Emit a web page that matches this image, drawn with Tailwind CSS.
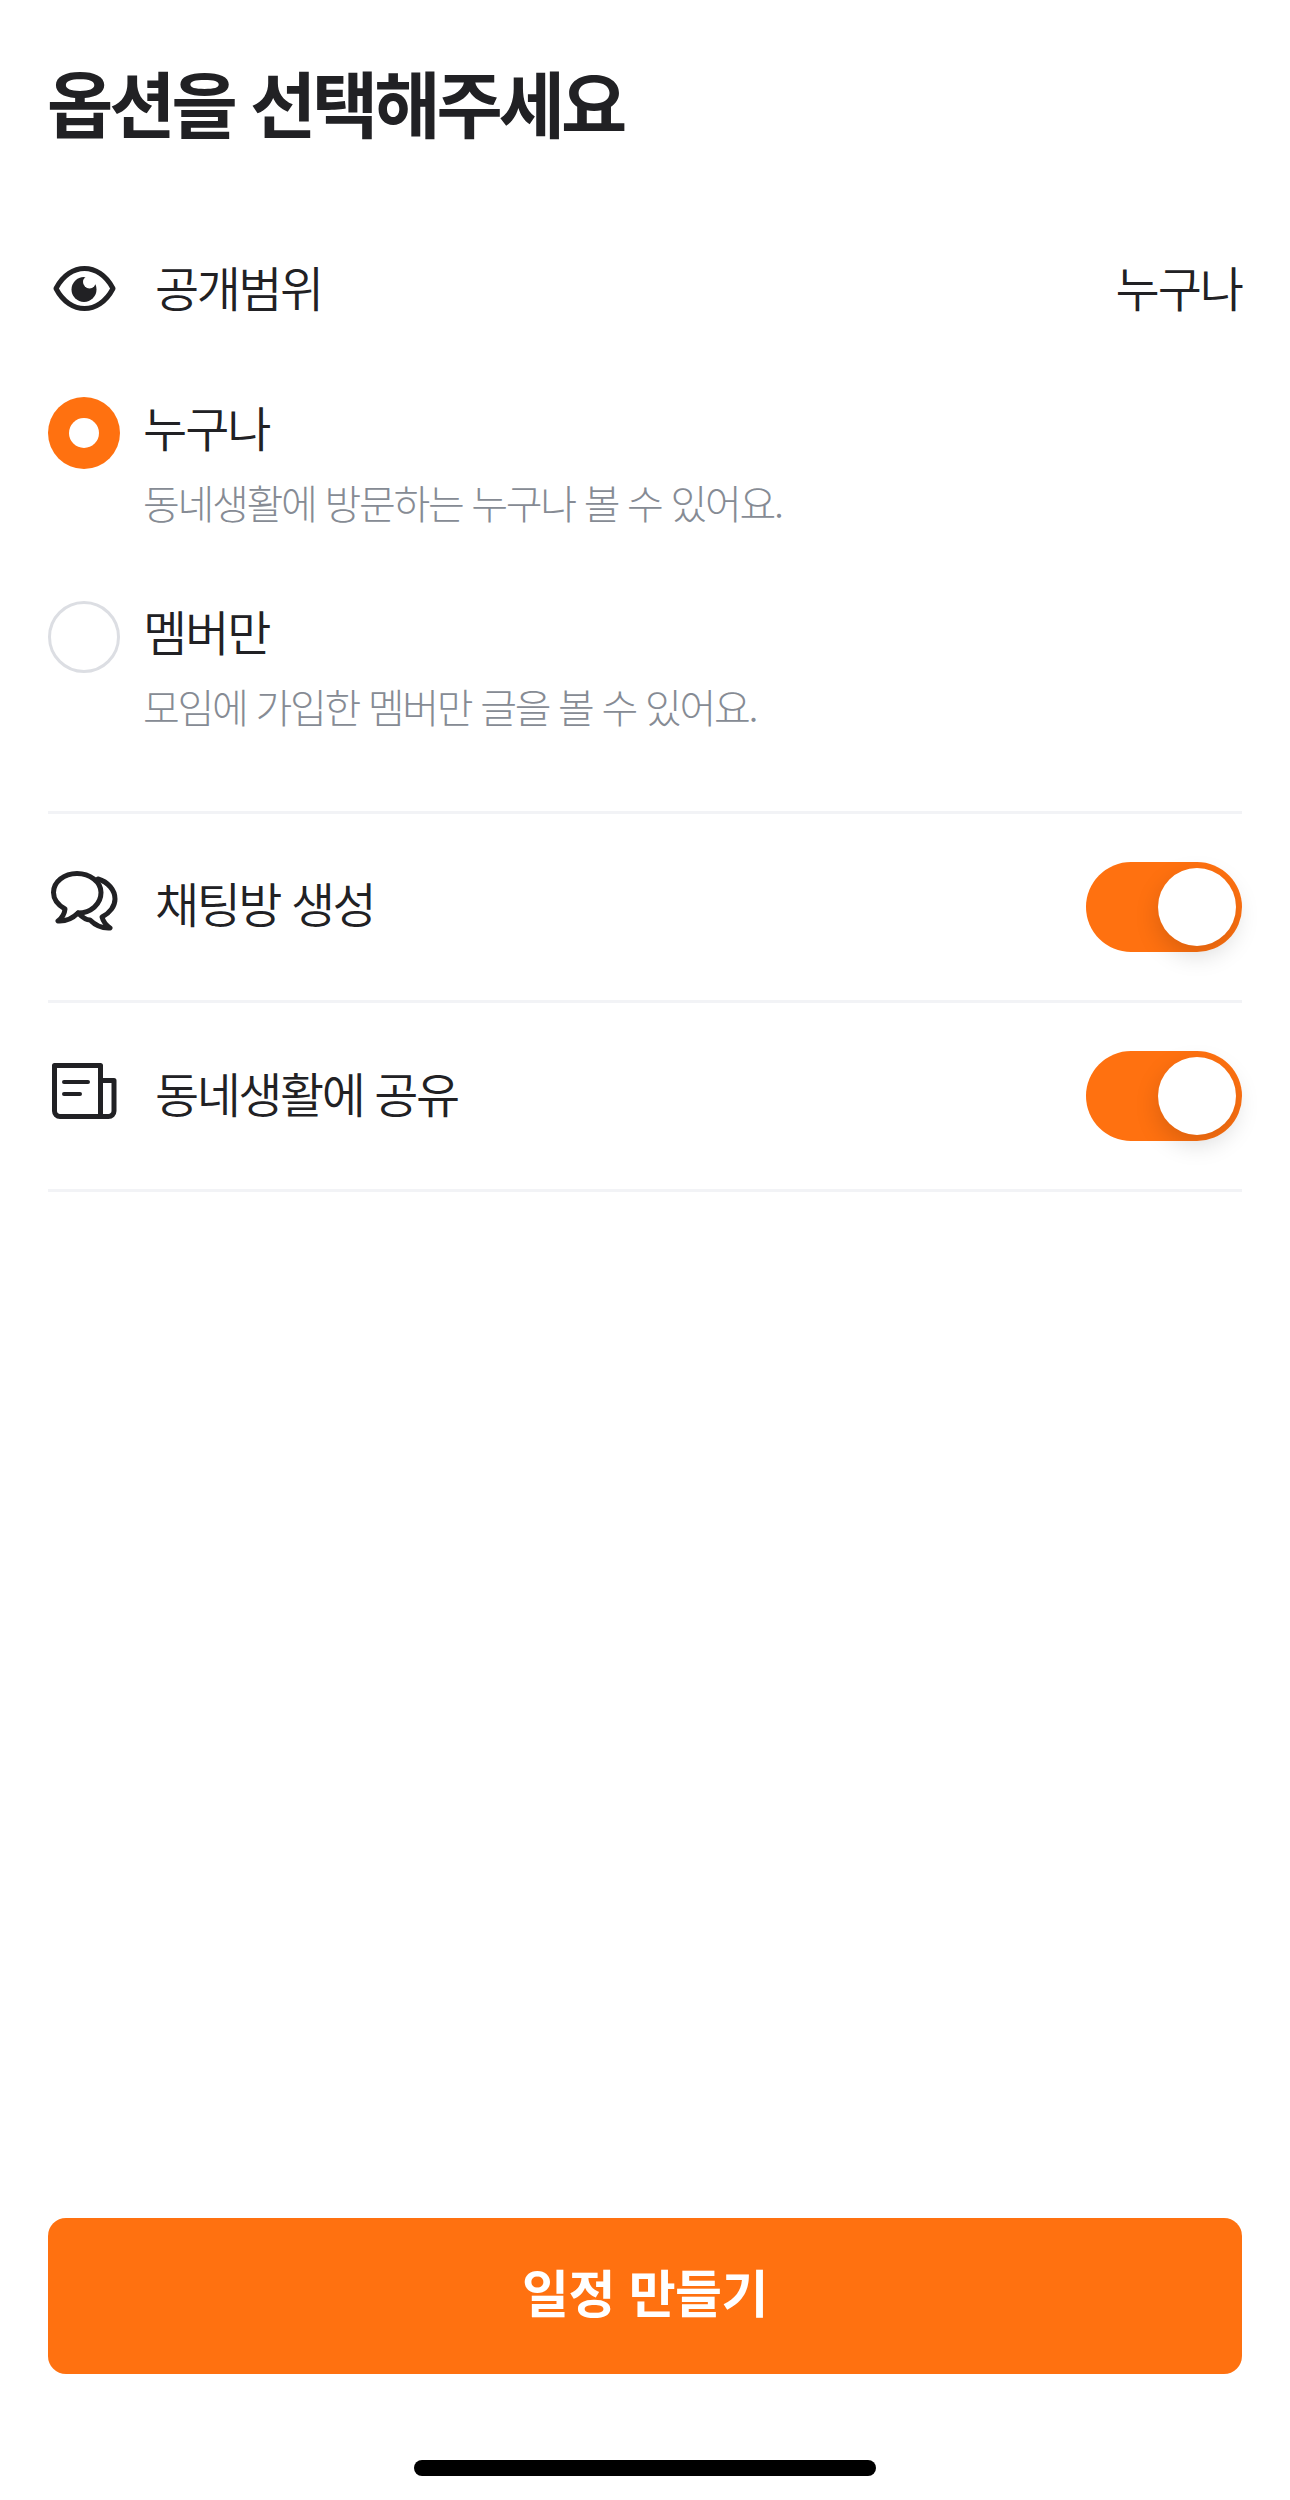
<!DOCTYPE html>
<html lang="ko">
<head>
  <meta charset="UTF-8" />
  <title>옵션 선택</title>
  <script src="https://cdn.jsdelivr.net/npm/@tailwindcss/browser@4"></script>
</head>
<body class="bg-white">
<div class="w-[1290px] h-[2500px] flex flex-col font-['Noto_Sans_CJK_KR',sans-serif] text-[#212124] overflow-hidden">

  <!-- Title -->
  <h1 class="mt-[55px] ml-[47px] h-[92px] leading-[92px] text-[72px] font-bold tracking-[-4px]">옵션을 선택해주세요</h1>

  <div class="mx-[48px] flex-1 flex flex-col">

    <!-- Visibility -->
    <div class="mt-[97px] h-[88px] flex items-center">
      <svg class="w-[72px] h-[72px] shrink-0" viewBox="0 0 72 72" fill="none" stroke="#212124" stroke-width="5" stroke-linejoin="round">
        <path d="M8 36.5C15 23 26 16.5 36.5 16.5S58 23 65 36.5C58 50 47 56.5 36.5 56.5S15 50 8 36.5Z" />
        <circle cx="36" cy="37.5" r="12.5" fill="#212124" stroke="none" />
        <circle cx="41.5" cy="30" r="6.5" fill="#fff" stroke="none" />
      </svg>
      <span class="ml-[35px] -translate-y-[2px] text-[48px] font-[350] tracking-[-2.5px]">공개범위</span>
      <span class="ml-auto -translate-y-[2px] text-[48px] font-[350] tracking-[-2px]">누구나</span>
    </div>

    <!-- Radio options -->
    <div class="mt-[65px] flex items-start gap-[23px]">
      <div class="w-[72px] h-[72px] rounded-full bg-[#ff7110] flex items-center justify-center shrink-0">
        <div class="w-[30px] h-[30px] rounded-full bg-white"></div>
      </div>
      <div>
        <p class="h-[58px] leading-[58px] text-[48px] font-[350] tracking-[-2px]">누구나</p>
        <p class="mt-[17px] h-[60px] leading-[60px] text-[40px] font-light tracking-[-2.3px] text-[#868b94]">동네생활에 방문하는 누구나 볼 수 있어요.</p>
      </div>
    </div>
    <div class="mt-[69px] flex items-start gap-[23px]">
      <div class="w-[72px] h-[72px] rounded-full border-[3px] border-[#dcdee3] shrink-0"></div>
      <div>
        <p class="h-[58px] leading-[58px] text-[48px] font-[350] tracking-[-2px]">멤버만</p>
        <p class="mt-[17px] h-[60px] leading-[60px] text-[40px] font-light tracking-[-2.3px] text-[#868b94]">모임에 가입한 멤버만 글을 볼 수 있어요.</p>
      </div>
    </div>

    <!-- Toggles -->
    <div class="mt-[75px] border-t-[3px] border-[#f2f3f6] h-[189px] flex items-center">
      <svg class="w-[72px] h-[72px] shrink-0 -mt-[6px]" viewBox="0 0 72 72" fill="none" stroke="#212124" stroke-width="5" stroke-linejoin="round" stroke-linecap="round">
        <path d="M29 5.5C16 5.5 5.5 14 5.5 24.5C5.5 31 10 37 17 41C16.5 46 14 50 10 53C18 53.5 25 50 30 45C43 45 53 36 53 24.5C53 14 42 5.5 29 5.5Z" />
        <path d="M50 11C60 14 67 22 67 31C67 38 62 45 54 49C55 53 58 57 62 60C54 60.5 47 57 42 52C37 52 33 48 30 45" />
      </svg>
      <span class="ml-[35px] -translate-y-[5px] text-[48px] font-[350] tracking-[-2.5px]">채팅방 생성</span>
      <div class="ml-auto w-[156px] h-[90px] rounded-full bg-[#ff7110] flex items-center justify-end pr-[6px]">
        <div class="w-[78px] h-[78px] rounded-full bg-white shadow-[0_9px_24px_rgba(0,0,0,0.15)]"></div>
      </div>
    </div>
    <div class="border-t-[3px] border-[#f2f3f6] h-[189px] flex items-center">
      <svg class="w-[72px] h-[72px] shrink-0" viewBox="0 0 72 72" fill="none" stroke="#212124" stroke-width="5" stroke-linejoin="round" stroke-linecap="round">
        <path d="M52.5 56.5H12A5.5 5.5 0 0 1 6.5 51V5.5H52.5V56.5Z" />
        <path d="M52.5 20.5H66V51A5.5 5.5 0 0 1 60.5 56.5H52.5" />
        <path d="M16 22H40M16 34H32" stroke-width="4" />
      </svg>
      <span class="ml-[35px] -translate-y-[4px] text-[48px] font-[350] tracking-[-2.5px]">동네생활에 공유</span>
      <div class="ml-auto w-[156px] h-[90px] rounded-full bg-[#ff7110] flex items-center justify-end pr-[6px]">
        <div class="w-[78px] h-[78px] rounded-full bg-white shadow-[0_9px_24px_rgba(0,0,0,0.15)]"></div>
      </div>
    </div>
    <div class="border-t-[3px] border-[#f2f3f6]"></div>

    <!-- Submit -->
    <button class="mt-auto h-[156px] pb-[10px] w-full rounded-[18px] bg-[#ff7110] text-white text-[51px] font-bold tracking-[-0.5px]">일정 만들기</button>
  </div>

  <!-- Home indicator -->
  <div class="mt-[86px] mb-[24px] mx-auto w-[462px] h-[16px] rounded-full bg-black"></div>
</div>
</body>
</html>
